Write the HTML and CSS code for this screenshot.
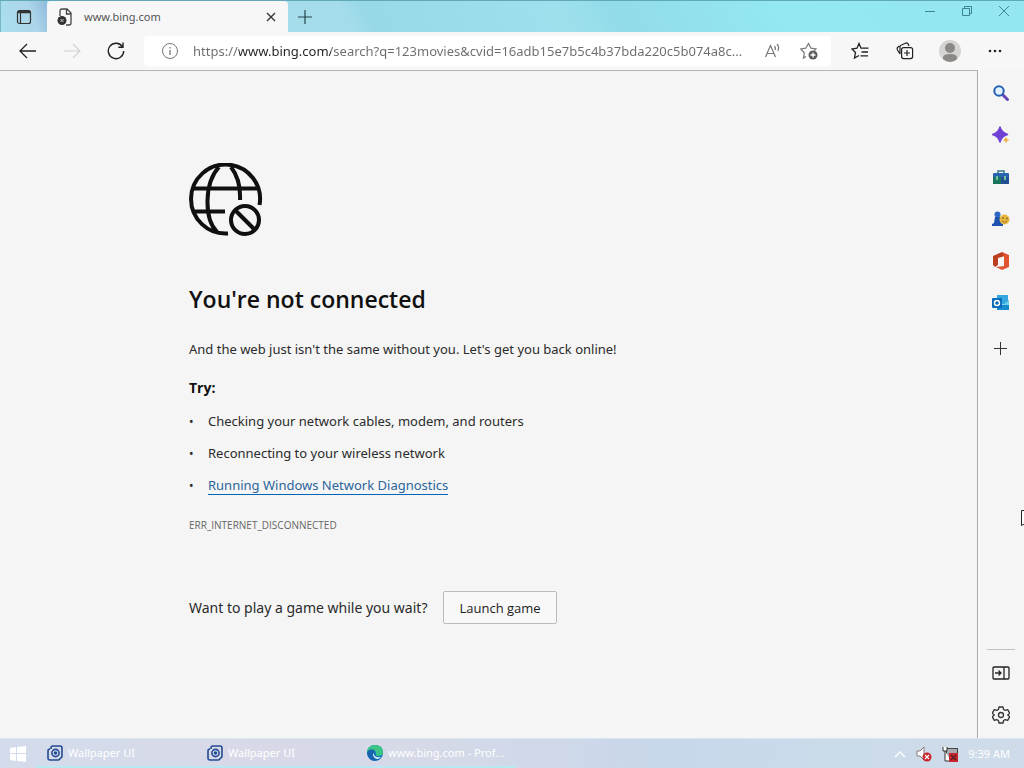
FILE: index.html
```html
<!DOCTYPE html>
<html lang="en">
<head>
    <meta charset="UTF-8">
    <meta name="viewport" content="width=device-width, initial-scale=1.0">
    <title>www.bing.com</title>
    <link rel="stylesheet" href="styles.css">
</head>
<body>
    <header class="titlebar">
        <button class="tab-actions" aria-label="Tab actions menu">
            <svg width="16" height="16" viewBox="0 0 16 16" fill="none" stroke="#333" stroke-width="1.2"><rect x="1.5" y="1.5" width="13" height="13" rx="2"/><path d="M2 3h12" stroke-width="2.500"/><path d="M4.5 4v10"/></svg>
        </button>
        <div class="tab">
            <svg width="16" height="18" viewBox="0 0 16 18" fill="none" stroke="#444" stroke-width="1.3"><path d="M3 8V3q0-2 2-2h5l4 4v10q0 2-2 2H9M9.500 1v5H14"/><circle cx="5" cy="12.500" r="4.500" fill="#333" stroke="none"/><path d="M3.500 11l3 3M6.500 11l-3 3" stroke="#ccc" stroke-width="1"/></svg>
            <span class="tab-title">www.bing.com</span>
            <button class="tab-close" aria-label="Close tab">
                <svg width="10" height="10" viewBox="0 0 10 10" stroke="#333" stroke-width="1.300"><path d="M1 1l8 8M9 1l-8 8"/></svg>
            </button>
        </div>
        <button class="new-tab" aria-label="New tab">
            <svg width="14" height="14" viewBox="0 0 14 14" stroke="#24474f" stroke-width="1.2"><path d="M7 0v14M0 7h14"/></svg>
        </button>
        <div class="window-buttons">
            <button aria-label="Minimize"><svg width="12" height="12" viewBox="0 0 12 12" stroke="#3d8590"><path d="M1 6.500h10"/></svg></button>
            <button aria-label="Restore"><svg width="12" height="12" viewBox="0 0 12 12" fill="none" stroke="#3d8590"><path d="M1.500 3.500h7v7h-7zM3.500 3.500v-2h7v7h-2"/></svg></button>
            <button aria-label="Close"><svg width="12" height="12" viewBox="0 0 12 12" stroke="#3d8590"><path d="M1 1l10 10M11 1L1 11"/></svg></button>
        </div>
    </header>

    <nav class="toolbar">
        <div class="nav-buttons">
            <button aria-label="Back"><svg width="18" height="16" viewBox="0 0 18 16" fill="none" stroke="#222" stroke-width="1.300"><path d="M8 1L1 8l7 7M1 8h16"/></svg></button>
            <button aria-label="Forward" disabled><svg width="18" height="16" viewBox="0 0 18 16" fill="none" stroke="#d2d2d2" stroke-width="1.200"><path d="M10 1l7 7-7 7M17 8H1"/></svg></button>
            <button aria-label="Refresh"><svg width="18" height="18" viewBox="0 0 18 18" fill="none" stroke="#222" stroke-width="1.400"><path d="M15.500 4.800A7.700 7.700 0 1 0 16.700 9M16 .5v4.700h-4.700"/></svg></button>
        </div>
        <div class="address">
            <svg width="18" height="18" viewBox="0 0 18 18" fill="none" stroke="#777"><circle cx="9" cy="9" r="7.500"/><path d="M9 8v5M9 5v1.500" stroke-width="1.300"/></svg>
            <input class="url" type="text" aria-label="Address" value="https://www.bing.com/search?q=123movies&amp;cvid=16adb15e7b5c4b37bda220c5b074a8c...">
            <button aria-label="Read aloud"><svg width="18" height="16" viewBox="0 0 18 16" fill="none" stroke="#777" stroke-width="1.200"><path d="M1.500 14L6.500 2.500l5 11.500M3 10.500h7M10.500 3q1.500 1.500.5 4M13 1q2.800 3 .8 7"/></svg></button>
            <button aria-label="Add to favorites"><svg width="18" height="18" viewBox="0 0 18 18" fill="none" stroke="#777" stroke-width="1.200"><path d="M6 14.500l-2.500 1.600.8-5.300L.8 7l5-.8L8.500 1.500l2.500 4.700 5 .8-1.500 1.700"/><circle cx="13" cy="13" r="4.500" fill="#5c5c5c" stroke="none"/><path d="M13 10.500v5M10.500 13h5" stroke="#fff" stroke-width="1.300"/></svg></button>
        </div>
        <div class="tools">
            <button aria-label="Favorites"><svg width="18" height="18" viewBox="0 0 18 18" fill="none" stroke="#222" stroke-width="1.300"><path d="M8 13.500L3.500 16l1-5.500L1 7l5-.8L8 1.500l2 4.700h7.500M10.500 10H17M9.500 13.800H17"/></svg></button>
            <button aria-label="Collections"><svg width="18" height="18" viewBox="0 0 18 18" fill="none" stroke="#222" stroke-width="1.200"><path d="M4 12L1.500 8Q.5 6 2.300 4.800L3.500 4M4 12V5q0-1.500 1.500-2L10 1q2-.5 3 3"/><rect x="5.600" y="5.600" width="11" height="11" rx="2"/><path d="M11 8v6M8 11h6"/></svg></button>
            <button aria-label="Profile"><svg width="22" height="22" viewBox="0 0 22 22"><circle cx="11" cy="11" r="11" fill="#d6d4d2"/><circle cx="11" cy="8" r="5" fill="#8c8885"/><path d="M4 19q-1-5 7-5t7 5q-3 3-7 3t-7-3z" fill="#8c8885"/></svg></button>
            <button aria-label="Settings and more"><svg width="14" height="4" viewBox="0 0 14 4" fill="#222"><circle cx="2" cy="2" r="1.300"/><circle cx="7" cy="2" r="1.300"/><circle cx="12" cy="2" r="1.300"/></svg></button>
        </div>
    </nav>

    <div class="content">
        <main class="page">
            <svg class="globe" width="74" height="74" viewBox="0 0 74 74" fill="none" stroke="#101010" stroke-width="4">
                <path d="M70.500 42A34.500 34.500 0 1 0 39 70.400M3 25.500h66M3 48.500h33M28 69C15 56 15 20 30 4M42 4q10 13 9 33"/>
                <circle cx="56" cy="57" r="14"/><path d="M46.500 47.500l19 19"/>
            </svg>
            <h1>You're not connected</h1>
            <p class="summary">And the web just isn't the same without you. Let's get you back online!</p>
            <h2>Try:</h2>
            <ul class="tips">
                <li>Checking your network cables, modem, and routers</li>
                <li>Reconnecting to your wireless network</li>
                <li><a href="#">Running Windows Network Diagnostics</a></li>
            </ul>
            <div class="error-code">ERR_INTERNET_DISCONNECTED</div>
            <div class="game">
                <span>Want to play a game while you wait?</span>
                <button class="launch" type="button">Launch game</button>
            </div>
        </main>

        <aside class="sidebar">
            <button aria-label="Search"><svg width="18" height="18" viewBox="0 0 18 18" fill="none"><path d="M10.500 10.500l5 5" stroke="#6a45b8" stroke-width="3" stroke-linecap="round"/><circle cx="7" cy="7" r="4.700" fill="#e2f2fc" stroke="#235fb5" stroke-width="2"/></svg></button>
            <button aria-label="Discover"><svg width="18" height="18" viewBox="0 0 18 18"><path d="M8 1q1.500 5.500 7.500 7.500Q9.500 10 8 16 6.500 10 .5 8.500 6.500 7 8 1z" fill="#7140d5" stroke="#7140d5" stroke-width="1.500" stroke-linejoin="round"/><path d="M14 10.500l1 2.500 2.500 1-2.500 1-1 2.500-1-2.500-2.500-1 2.500-1z" fill="#f0ad42"/></svg></button>
            <button aria-label="Tools"><svg width="18" height="18" viewBox="0 0 18 18"><path d="M6 5V3h6v2" fill="none" stroke="#34758c" stroke-width="1.500"/><rect x="1" y="5" width="16" height="5" rx="1" fill="#2865b0"/><path d="M1 9h16v7H1z" fill="#18755b"/><path d="M9 9h8v7H9z" fill="#214f91"/><path d="M4 8h2v4H4zM12 8h2v4h-2z" fill="#72c2a0"/></svg></button>
            <button aria-label="Games"><svg width="18" height="18" viewBox="0 0 18 18"><circle cx="5.500" cy="4.500" r="3" fill="#2e67c5"/><path d="M3 7h5l1 6 2 1v2H0v-2l2-1z" fill="#1d53ae"/><circle cx="12.500" cy="9.500" r="5" fill="#e6b83f"/><circle cx="11" cy="8" r="1" fill="#9a712b"/><circle cx="15" cy="8.500" r="1" fill="#9a712b"/><path d="M10 11q3 3 5 0" fill="none" stroke="#9a712b"/></svg></button>
            <button aria-label="Office"><svg width="18" height="20" viewBox="0 0 18 20"><path d="M1 5l9-4 3 2v2L6 7v7l-3 2-2-2z" fill="#bb3e20"/><path d="M10 1l7 3v12l-7 3-6-3 8-1V5z" fill="#e25330"/></svg></button>
            <button aria-label="Outlook"><svg width="18" height="18" viewBox="0 0 18 18"><path d="M5 1h11v9H5z" fill="#36a8df"/><path d="M5 7l6 4 6-5v10H5z" fill="#168bd0"/><path d="M11 11l6-5v5z" fill="#71d1ed"/><rect y="4" width="10" height="10" rx="1" fill="#096cb8"/><circle cx="5" cy="9" r="2.500" fill="none" stroke="#fff" stroke-width="1.400"/></svg></button>
            <button class="add" aria-label="Customize"><svg width="14" height="14" viewBox="0 0 14 14" stroke="#333"><path d="M6.500 0v13M0 6.500h13"/></svg></button>
            <div class="sidebar-bottom">
                <button aria-label="Hide sidebar"><svg width="18" height="14" viewBox="0 0 18 14" fill="none" stroke="#222" stroke-width="1.300"><rect x="1" y="1" width="16" height="12" rx="1"/><path d="M12 1v12M3 7h6M6.500 4.500L9 7 6.500 9.500"/></svg></button>
                <button aria-label="Settings"><svg width="18" height="18" viewBox="0 0 18 18" fill="none" stroke="#333" stroke-width="1.300"><path d="M7 1h4l.6 2.500 1.600.9 2.500-.7 2 3.400L15.800 9l1.900 1.900-2 3.400-2.500-.7-1.600.9L11 17H7l-.6-2.500-1.600-.9-2.500.7-2-3.400L2.200 9 .3 7.100l2-3.400 2.500.7 1.600-.9z" stroke-linejoin="round"/><circle cx="9" cy="9" r="2.500"/></svg></button>
            </div>
            <svg class="cursor" width="3" height="18" viewBox="0 0 3 18" fill="#fff" stroke="#222"><path d="M4 2.500H.5v15L4 15.500"/></svg>
        </aside>
    </div>

    <footer class="taskbar">
        <button class="start" aria-label="Start"><svg width="18" height="18" viewBox="0 0 18 18" fill="#fff"><path d="M1 3l6-1v6H1zM8 2l9-1v7H8zM1 9h6v7l-6-1zM8 9h9v8l-9-1z"/></svg></button>
        <button class="task">
            <svg width="16" height="16" viewBox="0 0 16 16" fill="none" stroke="#244b91" stroke-width="1.600"><path d="M4 4V3q0-2 2-2h7q2 0 2 2v8q0 2-2 2"/><path d="M3 4q-2 0-2 2v7q0 2 2 2h8q2 0 2-2"/><circle cx="8.500" cy="8" r="3.600" fill="#d7e3f5"/><circle cx="8.500" cy="8" r="1" fill="#244b91"/></svg>
            <span>Wallpaper UI</span>
        </button>
        <button class="task">
            <svg width="16" height="16" viewBox="0 0 16 16" fill="none" stroke="#244b91" stroke-width="1.600"><path d="M4 4V3q0-2 2-2h7q2 0 2 2v8q0 2-2 2"/><path d="M3 4q-2 0-2 2v7q0 2 2 2h8q2 0 2-2"/><circle cx="8.500" cy="8" r="3.600" fill="#d7e3f5"/><circle cx="8.500" cy="8" r="1" fill="#244b91"/></svg>
            <span>Wallpaper UI</span>
        </button>
        <button class="task">
            <svg width="16" height="16" viewBox="0 0 16 16"><circle cx="8" cy="8" r="8" fill="#1672bd"/><path d="M0 8Q0 0 8 0t8 7q0 4-5 4-3 0-2-3Q8 4 4 4.500 1 5 0 8z" fill="#3ac587"/><path d="M0 8q1-4 5-3.500Q9 5 7 8q-2 6 5 6-9 5-12-6z" fill="#1765af"/><path d="M7 8q-1 5 7 4-4 4-7 0-2-2 0-4z" fill="#dff4ff"/></svg>
            <span>www.bing.com - Prof...</span>
        </button>
        <div class="tray">
            <svg width="12" height="8" viewBox="0 0 12 8" fill="none" stroke="#fff" stroke-width="1.300"><path d="M1 7l5-5 5 5"/></svg>
            <svg width="16" height="16" viewBox="0 0 16 16"><path d="M1 5h3l4-4v13l-4-4H1z" fill="#fff" stroke="#8d777b"/><circle cx="11" cy="11" r="4.500" fill="#c9252d"/><path d="M9 9l4 4M13 9l-4 4" stroke="#fff" stroke-width="1.300"/></svg>
            <svg width="16" height="16" viewBox="0 0 16 16"><rect x="4.500" y="2.500" width="11" height="10" fill="#a9aab0" stroke="#444"/><path d="M1 1v4h4V1M3 5v10h6" fill="#fff" stroke="#333"/><path d="M7 7h9v9H7z" fill="#c9252d"/><path d="M9 9l5 5M14 9l-5 5" stroke="#541e25" stroke-width="1.300"/></svg>
            <time>9:39 AM</time>
        </div>
    </footer>
</body>
</html>
```
FILE: styles.css
```css
*{
    box-sizing: border-box;
}
body{
    margin: 0;
    min-height: 100vh;
    display: flex;
    flex-direction: column;
    font-family: "Noto Sans", "Open Sans", sans-serif;
    font-size: 13px;
    color: #2b2b2b;
    background-color: #f5f5f5;
}
button{
    display: flex;
    align-items: center;
    justify-content: center;
    padding: 0;
    border: 0;
    background: none;
    font-family: "Open Sans", sans-serif;
}
svg{
    flex-shrink: 0;
}

/* tab strip */
.titlebar{
    height: 32px;
    display: flex;
    border-top: 1px solid #5fa9b9;
    background: linear-gradient(60deg, #a5dce9 0%, #a5dce9 34%, #98d9e8 36%, #9ee0ec 55%, #92dbe9 60%, #93e8f2 76%, #94e6f0 100%);
}
.tab-actions{
    width: 47px;
    border-left: 1px solid #78b5c6;
    background: linear-gradient(70deg, #a9e0ec, #acd5e9 65%, #8ebbdc);
}
.tab{
    width: 241px;
    padding: 0 12px 0 10px;
    display: flex;
    align-items: center;
    gap: 11px;
    background-color: #f7f7f8;
    border-radius: 4px 4px 0 0;
}
.tab-title{
    flex: 1;
    font-size: 11px;
    color: #555;
}
.new-tab{
    width: 34px;
}
.window-buttons{
    margin-left: auto;
    display: flex;
    align-items: flex-start;
    padding-right: 2px;
}
.window-buttons button{
    width: 37px;
    height: 20px;
}

/* navigation and address */
.toolbar{
    height: 38px;
    display: flex;
    align-items: center;
    background-color: #f7f7f8;
}
.nav-buttons{
    width: 144px;
    padding-left: 6px;
    display: flex;
}
.nav-buttons button{
    width: 44px;
    height: 32px;
}
.address{
    flex: 1;
    min-width: 0;
    height: 30px;
    padding: 0 4px 0 17px;
    display: flex;
    align-items: center;
    border-radius: 4px;
    background-color: #fff;
}
.url{
    flex: 1;
    min-width: 0;
    margin: 0 0 0 14px;
    padding: 0;
    border: 0;
    outline: 0;
    font-family: inherit;
    font-size: 13px;
    /* the host name is darker than the rest of the address */
    background-image: linear-gradient(90deg, #6c6c6c 46px, #222 46px, #222 138px, #6c6c6c 138px);
    -webkit-background-clip: text;
    background-clip: text;
    -webkit-text-fill-color: transparent;
}
.address button{
    width: 36px;
}
.tools{
    width: 193px;
    padding-left: 6px;
    display: flex;
}
.tools button{
    width: 45px;
    height: 30px;
}

.content{
    flex: 1;
    display: flex;
}
.page{
    flex: 1;
    padding: 92px 24px 24px 189px;
    border-top: 1px solid #b5b5b5;
    border-right: 1px solid #aaa;
    font-size: 14px;
}
.globe{
    display: block;
}
h1{
    margin: 46px 0 0;
    font-family: "Open Sans", sans-serif;
    font-size: 23px;
    line-height: 32px;
    font-weight: 600;
    color: #101010;
}
.summary{
    margin: 24px 0 0;
    font-size: 13px;
    line-height: 20px;
}
h2{
    margin: 19px 0 0;
    font-family: "Open Sans", sans-serif;
    font-size: 14px;
    line-height: 20px;
    font-weight: 700;
    color: #101010;
}
.tips{
    margin: 7px 0 0;
    padding: 0;
    list-style: none;
    font-size: 13px;
}
.tips li{
    display: flex;
    align-items: center;
    height: 32px;
}
.tips li::before{
    content: "•";
    width: 19px;
    font-size: 12px;
}
.tips a{
    line-height: 18px;
    color: #2b659b;
    text-decoration: none;
    border-bottom: 1px solid #0067b8;
}
.error-code{
    margin-top: 16px;
    font-family: "Open Sans", sans-serif;
    font-size: 10px;
    line-height: 16px;
    color: #666;
}
.game{
    margin-top: 58px;
    display: flex;
    align-items: center;
    gap: 16px;
}
.launch{
    height: 33px;
    padding: 0 15px;
    border: 1px solid #bbb;
    border-radius: 2px;
    background-color: #f8f8f8;
    font-size: 13px;
    color: #1b1b1b;
}

.sidebar{
    position: relative;
    width: 46px;
    display: flex;
    flex-direction: column;
    align-items: center;
    padding: 2px 2px 0 0;
    border-left: 2px solid #fafafa;
}
.sidebar button{
    width: 42px;
    height: 42px;
}
.sidebar .add{
    height: 50px;
}
.sidebar-bottom{
    margin-top: auto;
    padding: 2px 0;
    border-top: 1px solid #c2c2c2;
    width: 28px;
    display: flex;
    flex-direction: column;
    align-items: center;
}
.cursor{
    position: absolute;
    right: 0;
    top: 438px;
}

.taskbar{
    height: 30px;
    display: flex;
    background: linear-gradient(90deg, #d3dceb, #d8d9e8 25%, #d4d9e8 45%, #c8d7ea 65%, #cbdbea 80%, #cfdbe8);
    border-top: 1px solid #d9e7f2;
}
.start{
    width: 36px;
}
.task{
    width: 160px;
    padding-left: 11px;
    justify-content: flex-start;
    gap: 5px;
    font-family: inherit;
    font-size: 11px;
    color: #fff;
    border-bottom: 2px solid #b5eaf2;
}
.tray{
    margin-left: auto;
    padding-right: 14px;
    display: flex;
    align-items: center;
    gap: 10px;
    font-size: 11px;
    color: #fff;
}
```
